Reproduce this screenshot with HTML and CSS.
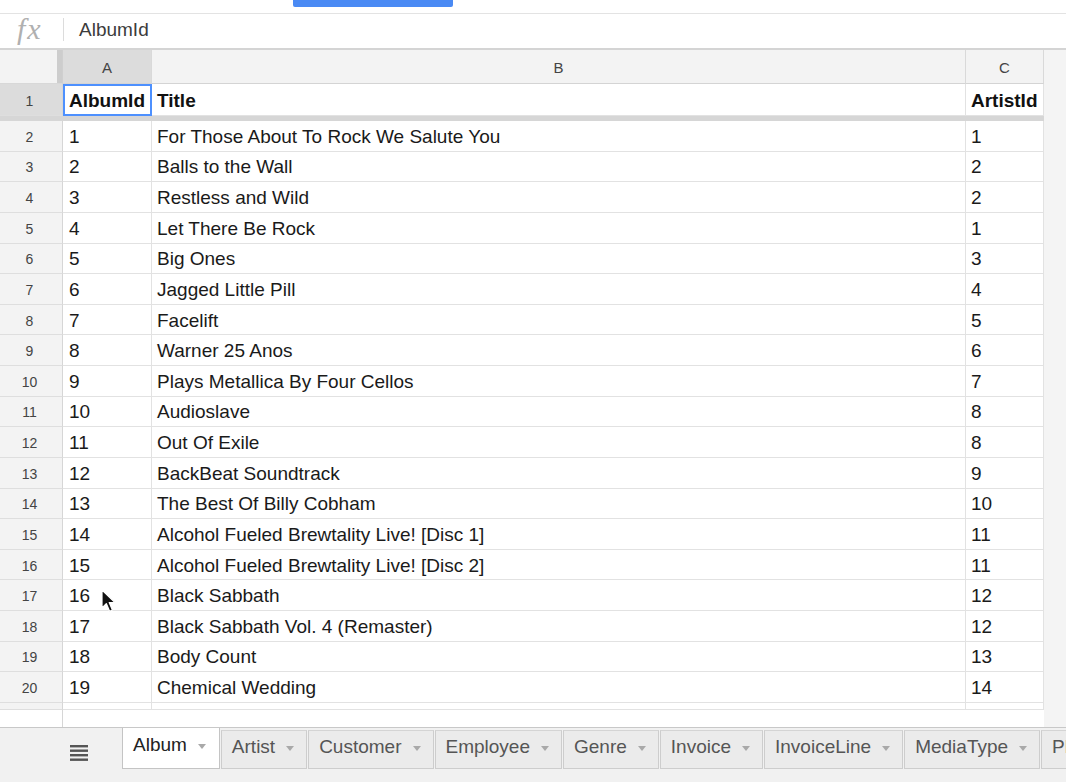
FILE: index.html
```html
<!DOCTYPE html>
<html>
<head>
<meta charset="utf-8">
<link rel="stylesheet" href="styles.css">
</head>
<body>
<div class="app">
  <div class="topbar"><div class="blue-btn"></div></div>
  <div class="formula">
    <span class="fx">fx</span>
    <span class="fsep"></span>
    <span class="ftext">AlbumId</span>
  </div>
  <div class="grid">
    <div class="row hdr">
      <div class="corner"><span class="freeze-v"></span></div>
      <div class="colh sel">A</div>
      <div class="colh">B</div>
      <div class="colh">C</div>
      <div class="side"></div>
    </div>
    <div class="row r1">
      <div class="rowh sel">1</div>
      <div class="cell b active">AlbumId</div>
      <div class="cell b">Title</div>
      <div class="cell b">ArtistId</div>
      <div class="side"></div>
    </div>
    <div class="freeze-h"><div class="fh-main"></div><div class="side"></div></div>
    <div class="row"><div class="rowh">2</div><div class="cell">1</div><div class="cell">For Those About To Rock We Salute You</div><div class="cell">1</div><div class="side"></div></div>
    <div class="row"><div class="rowh">3</div><div class="cell">2</div><div class="cell">Balls to the Wall</div><div class="cell">2</div><div class="side"></div></div>
    <div class="row"><div class="rowh">4</div><div class="cell">3</div><div class="cell">Restless and Wild</div><div class="cell">2</div><div class="side"></div></div>
    <div class="row"><div class="rowh">5</div><div class="cell">4</div><div class="cell">Let There Be Rock</div><div class="cell">1</div><div class="side"></div></div>
    <div class="row"><div class="rowh">6</div><div class="cell">5</div><div class="cell">Big Ones</div><div class="cell">3</div><div class="side"></div></div>
    <div class="row"><div class="rowh">7</div><div class="cell">6</div><div class="cell">Jagged Little Pill</div><div class="cell">4</div><div class="side"></div></div>
    <div class="row"><div class="rowh">8</div><div class="cell">7</div><div class="cell">Facelift</div><div class="cell">5</div><div class="side"></div></div>
    <div class="row"><div class="rowh">9</div><div class="cell">8</div><div class="cell">Warner 25 Anos</div><div class="cell">6</div><div class="side"></div></div>
    <div class="row"><div class="rowh">10</div><div class="cell">9</div><div class="cell">Plays Metallica By Four Cellos</div><div class="cell">7</div><div class="side"></div></div>
    <div class="row"><div class="rowh">11</div><div class="cell">10</div><div class="cell">Audioslave</div><div class="cell">8</div><div class="side"></div></div>
    <div class="row"><div class="rowh">12</div><div class="cell">11</div><div class="cell">Out Of Exile</div><div class="cell">8</div><div class="side"></div></div>
    <div class="row"><div class="rowh">13</div><div class="cell">12</div><div class="cell">BackBeat Soundtrack</div><div class="cell">9</div><div class="side"></div></div>
    <div class="row"><div class="rowh">14</div><div class="cell">13</div><div class="cell">The Best Of Billy Cobham</div><div class="cell">10</div><div class="side"></div></div>
    <div class="row"><div class="rowh">15</div><div class="cell">14</div><div class="cell">Alcohol Fueled Brewtality Live! [Disc 1]</div><div class="cell">11</div><div class="side"></div></div>
    <div class="row"><div class="rowh">16</div><div class="cell">15</div><div class="cell">Alcohol Fueled Brewtality Live! [Disc 2]</div><div class="cell">11</div><div class="side"></div></div>
    <div class="row"><div class="rowh">17</div><div class="cell">16</div><div class="cell">Black Sabbath</div><div class="cell">12</div><div class="side"></div></div>
    <div class="row"><div class="rowh">18</div><div class="cell">17</div><div class="cell">Black Sabbath Vol. 4 (Remaster)</div><div class="cell">12</div><div class="side"></div></div>
    <div class="row"><div class="rowh">19</div><div class="cell">18</div><div class="cell">Body Count</div><div class="cell">13</div><div class="side"></div></div>
    <div class="row"><div class="rowh">20</div><div class="cell">19</div><div class="cell">Chemical Wedding</div><div class="cell">14</div><div class="side"></div></div>
    <div class="row partial"><div class="rowh"></div><div class="cell"></div><div class="cell"></div><div class="cell"></div><div class="side"></div></div>
    <div class="filler"><div class="fill-h"></div><div class="fill-main"></div><div class="side"></div></div>
  </div>
  <div class="tabbar">
    <div class="menu">
      <svg width="18" height="16" viewBox="0 0 18 16"><rect x="0" y="0" width="18" height="2.4" fill="#555"/><rect x="0" y="4.5" width="18" height="2.4" fill="#555"/><rect x="0" y="9" width="18" height="2.4" fill="#555"/><rect x="0" y="13.5" width="18" height="2.4" fill="#555"/></svg>
    </div>
    <div class="tab active">Album<span class="caret"></span></div>
    <div class="tab">Artist<span class="caret"></span></div>
    <div class="tab">Customer<span class="caret"></span></div>
    <div class="tab">Employee<span class="caret"></span></div>
    <div class="tab">Genre<span class="caret"></span></div>
    <div class="tab">Invoice<span class="caret"></span></div>
    <div class="tab">InvoiceLine<span class="caret"></span></div>
    <div class="tab">MediaType<span class="caret"></span></div>
    <div class="tab">Playlist<span class="caret"></span></div>
  </div>
  <svg class="cursor" width="15" height="24" viewBox="0 0 15 24"><path d="M1 1 L1 19 L5.3 14.6 L8.6 22.2 L11.4 21 L8.2 13.6 L14 13.6 Z" fill="#111" stroke="#fff" stroke-width="1.2" stroke-linejoin="round"/></svg>
</div>
</body>
</html>
```

FILE: styles.css
```css
* { box-sizing: border-box; }
html, body { margin: 0; padding: 0; }
body {
  width: 1066px;
  height: 782px;
  overflow: hidden;
  background: #fff;
  font-family: "Liberation Sans", Arial, Helvetica, sans-serif;
  color: #222;
}
.app {
  position: relative;
  width: 1066px;
  height: 782px;
  display: flex;
  flex-direction: column;
  overflow: hidden;
}
.topbar {
  height: 14px;
  flex: 0 0 14px;
  border-bottom: 1px solid #e3e3e3;
  padding-left: 293px;
}
.blue-btn {
  width: 160px;
  height: 7px;
  background: #4a8af4;
  border-radius: 0 0 2px 2px;
}
.formula {
  height: 36px;
  flex: 0 0 36px;
  display: flex;
  align-items: center;
  border-bottom: 2px solid #d4d4d4;
  background: #fff;
}
.fx {
  font-family: "Liberation Serif", "DejaVu Serif", serif;
  font-style: italic;
  font-size: 30px;
  color: #b0b0b0;
  width: 63px;
  padding-left: 17px;
  margin-top: -5px;
  letter-spacing: 2px;
}
.fsep {
  width: 1px;
  height: 23px;
  background: #dcdcdc;
  margin-top: -4px;
}
.ftext {
  margin-left: 15px;
  font-size: 19px;
  color: #3c3c3c;
  margin-top: -3px;
}
.grid {
  flex: 0 0 auto;
  display: flex;
  flex-direction: column;
}
.row {
  display: grid;
  grid-template-columns: 63px 89px 814px 78px 22px;
  height: 30.63px;
}
.row > div {
  border-right: 1px solid #e2e2e2;
  border-bottom: 1px solid #e2e2e2;
  display: flex;
  align-items: center;
  white-space: nowrap;
  overflow: hidden;
}
.hdr { height: 34px; }
.r1 { height: 32px; }
.partial { height: 7px; }
.corner {
  background: #f3f3f3;
  position: relative;
  border-right: 1px solid #cfcfcf !important;
  border-bottom: 1px solid #d8d8d8 !important;
}
.freeze-v {
  position: absolute;
  right: 0;
  top: 0;
  width: 5px;
  height: 100%;
  background: #cdcdcd;
}
.colh {
  background: #f3f3f3;
  justify-content: center;
  font-size: 15px;
  color: #444;
  padding-top: 1px;
  border-right: 1px solid #d9d9d9 !important;
  border-bottom: 1px solid #d4d4d4 !important;
}
.colh.sel { background: #dcdcdc; }
.rowh {
  background: #f3f3f3;
  justify-content: center;
  font-size: 14px;
  color: #444;
  padding-right: 3px;
  padding-top: 2px;
  border-right: 1px solid #d6d6d6 !important;
  border-bottom: 1px solid #dedede !important;
}
.rowh.sel { background: #dcdcdc; }
.cell {
  font-size: 19px;
  padding-left: 5px;
  padding-top: 2px;
  color: #1a1a1a;
  background: #fff;
}
.row > .cell:nth-child(2) { padding-left: 6px; }
.cell.b { font-weight: bold; color: #111; }
.cell.active {
  outline: 2px solid #4d90fe;
  outline-offset: -2px;
  padding-left: 5px;
}
.side {
  background: #f4f4f4;
  border-right: none !important;
  border-bottom: none !important;
}
.freeze-h {
  height: 5px;
  display: grid;
  grid-template-columns: 1044px 22px;
}
.fh-main { background: #d6d6d6; }
.filler {
  height: 17px;
  display: grid;
  grid-template-columns: 63px 981px 22px;
}
.fill-h { border-right: 1px solid #d6d6d6; background: #fff; }
.fill-main { background: #fff; }
.tabbar {
  flex: 1 1 auto;
  background: #f1f1f1;
  border-top: 1px solid #c8c8c8;
  display: flex;
  align-items: flex-start;
  padding-left: 70px;
  gap: 1px;
  overflow: hidden;
}
.menu {
  flex: 0 0 51px;
  width: 51px;
  padding-top: 17px;
  display: flex;
}
.tab {
  margin-top: 2px;
  height: 39px;
  display: flex;
  align-items: center;
  padding: 0 12px 0 10px;
  background: #ebebeb;
  border: 1px solid #cdcdcd;
  border-top: 1px solid #d4d4d4;
  font-size: 19px;
  color: #555;
  white-space: nowrap;
  flex: 0 0 auto;
  padding-bottom: 4px;
}
.tab.active {
  margin-top: -1px;
  height: 42px;
  background: #fff;
  color: #222;
  border-top: none;
  border-color: #c4c4c4;
  padding-right: 13px;
}
.caret {
  display: inline-block;
  width: 0;
  height: 0;
  border-left: 4.5px solid transparent;
  border-right: 4.5px solid transparent;
  border-top: 5px solid #a9a9a9;
  margin-left: 11px;
  margin-top: 2px;
}
.cursor {
  position: absolute;
  left: 101px;
  top: 589px;
}
```
